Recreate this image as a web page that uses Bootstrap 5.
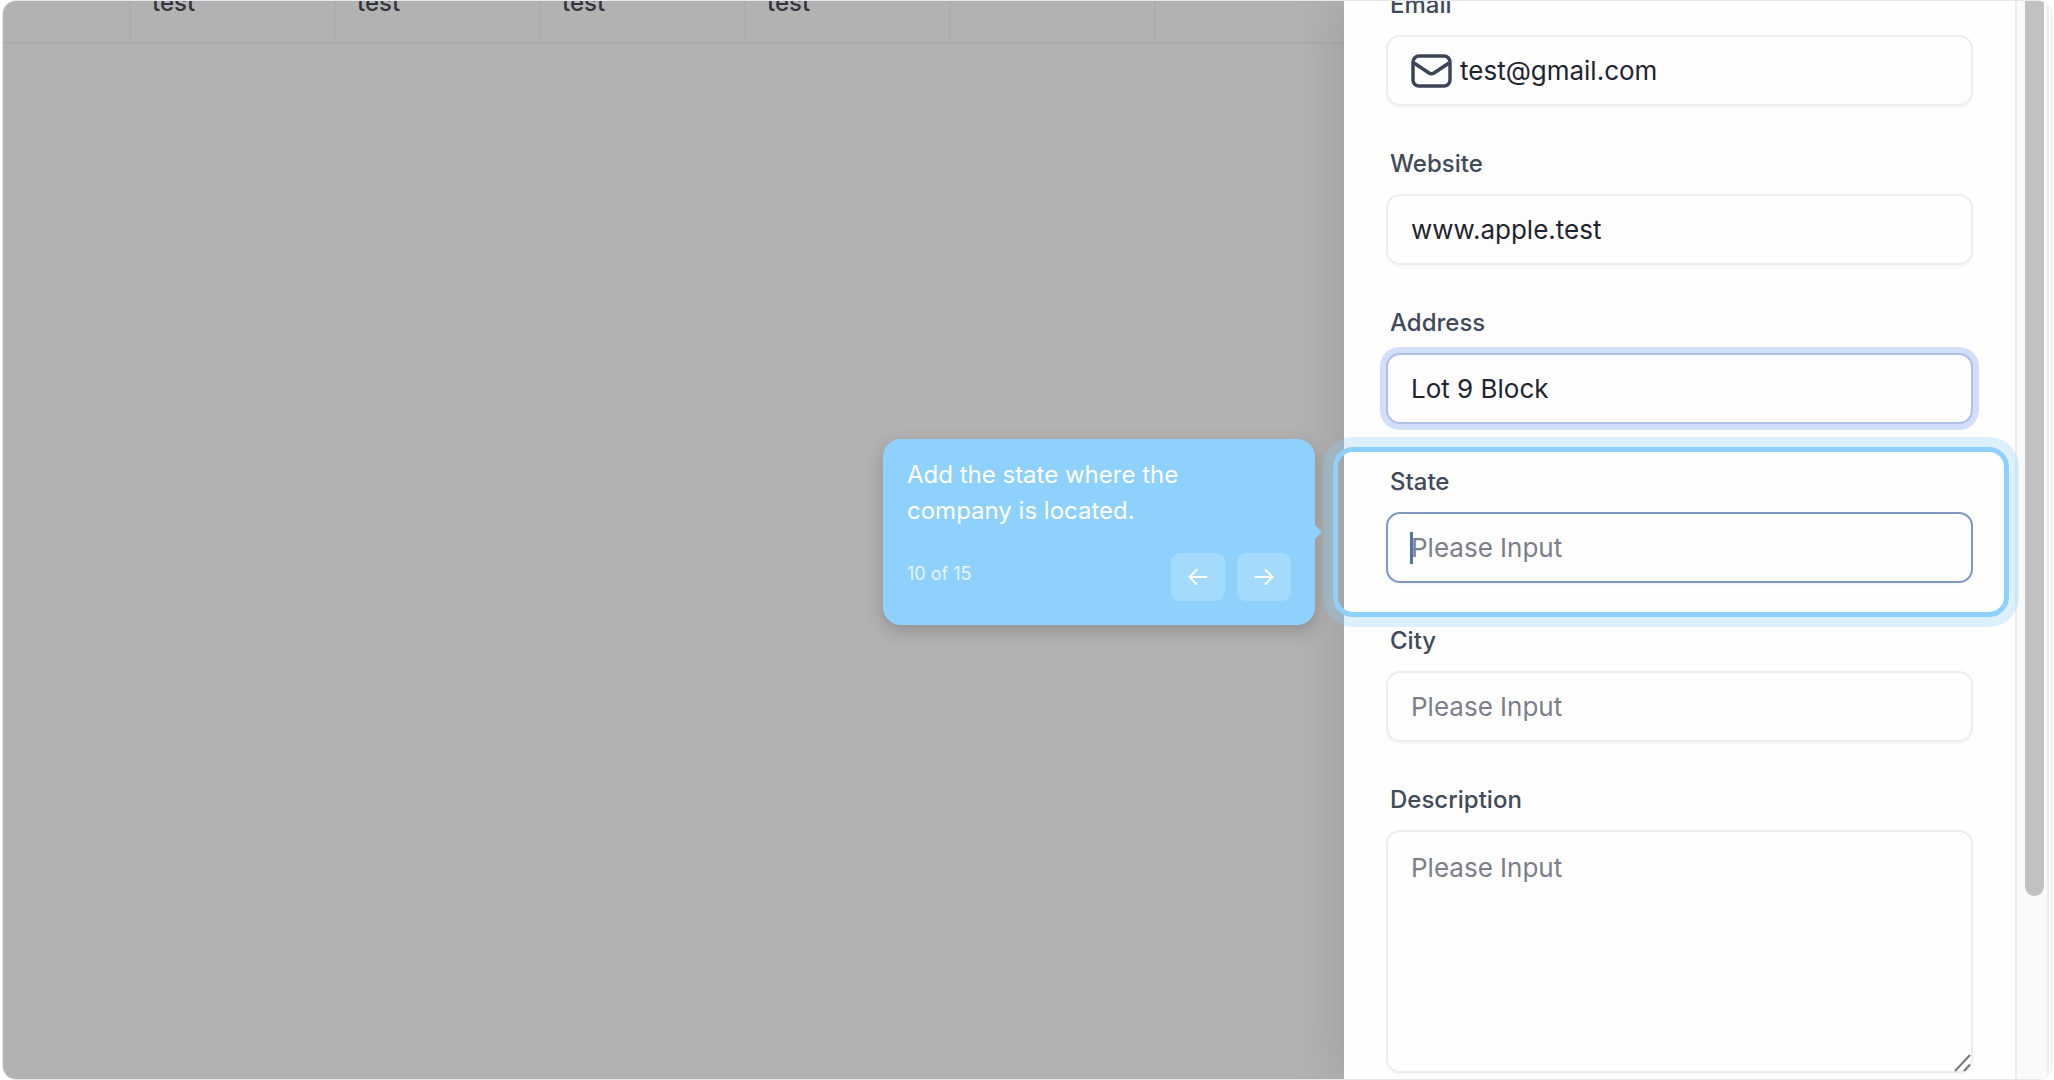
<!DOCTYPE html>
<html lang="en">
<head>
<meta charset="utf-8">
<meta name="viewport" content="width=device-width, initial-scale=1">
<title>Add company</title>
<link rel="stylesheet" href="https://cdn.jsdelivr.net/npm/bootstrap@5.3.0/dist/css/bootstrap.min.css">
<script src="https://cdn.jsdelivr.net/npm/bootstrap@5.3.0/dist/js/bootstrap.bundle.min.js"></script>
<style>
  body { font-family: Inter, "Liberation Sans", sans-serif; font-size: 26px; color: #1f2430; background: #fff; }
  .frame { height: 100vh; margin: 0 2px; border: 1px solid #e5e7eb; border-radius: 14px; overflow: hidden; }
  .backdrop-pane { background: #b2b2b2; overflow: hidden; min-width: 0; }
  .grid-row { height: 73px; margin-top: -30px; border-bottom: 2px solid #acacac; }
  .grid-cell { flex: 0 0 205px; border-left: 2px solid #acacac; padding: 14px 21px; font-size: 24px; line-height: 36px; font-weight: 500; color: #33343c; }
  .grid-cell:first-child { flex-basis: 126px; border-left: 0; }
  .grid-cell:last-child { flex: 1 1 0; }
  .side-panel { flex: 0 0 707px; background: #fefefe; box-shadow: 0 0 50px rgba(0,0,0,.14); position: relative; }
  .panel-form { padding: 0 42px; margin-top: -14px; min-width: 0; }
  .field { position: relative; margin-bottom: 40px; }
  .field-label { display: block; margin: 0 0 12px 4px; font-size: 24px; line-height: 36px; font-weight: 500; color: #414a59; }
  .field-box, .field-box:focus { height: 71px; border: 2px solid #ededee; border-radius: 14px; padding: 0 23px; font-size: 26px; line-height: 36px; color: #1f2430; background: #fefefe; box-shadow: 0 2px 3px rgba(0,0,0,.03); }
  .field-box::placeholder { color: #7b7f89; opacity: 1; }
  .area-box { height: 243px; padding-top: 18px; resize: none; display: block; }
  .ringed { border-color: #b0c0e2; box-shadow: 0 0 0 6px #d1dffb; }
  .active-box { border-color: #7d98c2; }
  .bare-input { border: 0; outline: 0; background: transparent; min-width: 0; padding: 0; color: inherit; }
  .text-caret { position: absolute; left: 24px; bottom: 19px; width: 3px; height: 32px; background: #4b74b3; }
  .grip { position: absolute; right: 1px; bottom: 1px; }
  .tour-ring { position: absolute; inset: -17px -36px -34px -53px; border: 5px solid #8ed1fc; border-radius: 20px; box-shadow: 0 0 0 10px rgba(142,209,252,.3); pointer-events: none; }
  .tour-tip { position: absolute; right: calc(100% + 71px); top: -25px; width: 432px; padding: 18px 24px 24px; background: #8ed1fc; border-radius: 18px; color: #fff; box-shadow: 0 6px 18px rgba(0,0,0,.2); }
  .tour-tip::after { content: ""; position: absolute; left: 100%; top: 86px; border: 7px solid transparent; border-left-color: #8ed1fc; border-right-width: 0; }
  .tour-text { font-size: 24px; line-height: 36px; margin-bottom: 24px; padding-right: 48px; }
  .tour-count { font-size: 18px; line-height: 42px; color: rgba(255,255,255,.8); }
  .tour-btn { width: 54px; height: 48px; padding: 0; border: 0; border-radius: 9px; background: rgba(255,255,255,.2); }
  .scroll-track { flex: 0 0 36px; background: #fafafa; border-left: 2px solid #ececec; padding-left: 8px; }
  .scroll-thumb { width: 19px; height: 83%; background: #c1c1c1; border-radius: 0 0 10px 10px; }
  .scroll-edge { width: 4px; border-left: 2px solid #ededed; }
</style>
</head>
<body>
<div class="frame d-flex">
  <main class="backdrop-pane flex-grow-1">
    <div class="grid-row d-flex">
      <div class="grid-cell"></div>
      <div class="grid-cell">test</div>
      <div class="grid-cell">test</div>
      <div class="grid-cell">test</div>
      <div class="grid-cell">test</div>
      <div class="grid-cell"></div>
      <div class="grid-cell"></div>
    </div>
  </main>
  <aside class="side-panel d-flex">
    <form class="panel-form flex-grow-1">
      <div class="field">
        <label class="field-label" for="email">Email</label>
        <div class="field-box d-flex align-items-center">
          <svg class="flex-shrink-0 me-2" width="41" height="34" viewBox="0 0 41 34" fill="none" stroke="#3b4557" stroke-width="3.500" stroke-linejoin="round"><rect x="2" y="2" width="37" height="30" rx="6"/><path d="M3 9l15 10q2.500 1.500 5 0L38 9"/></svg>
          <input class="bare-input flex-grow-1" id="email" type="email" value="test@gmail.com">
        </div>
      </div>
      <div class="field">
        <label class="field-label" for="website">Website</label>
        <input class="form-control field-box" id="website" type="text" value="www.apple.test">
      </div>
      <div class="field">
        <label class="field-label" for="address">Address</label>
        <input class="form-control field-box ringed" id="address" type="text" value="Lot 9 Block">
      </div>
      <div class="field">
        <label class="field-label" for="state">State</label>
        <input class="form-control field-box active-box" id="state" type="text" placeholder="Please Input">
        <span class="text-caret"></span>
        <div class="tour-ring"></div>
        <div class="tour-tip" role="dialog" aria-label="Tour step">
          <p class="tour-text">Add the state where the company is located.</p>
          <div class="d-flex align-items-start justify-content-between">
            <span class="tour-count">10 of 15</span>
            <div class="d-flex tour-nav">
              <button type="button" class="btn tour-btn me-2 d-flex align-items-center justify-content-center" aria-label="Previous"><svg width="20" height="18" viewBox="0 0 20 18" fill="none" stroke="#fff" stroke-width="2" stroke-linecap="round" stroke-linejoin="round"><path d="M18.500 9H1.500M8.500 2l-7 7 7 7"/></svg></button>
              <button type="button" class="btn tour-btn ms-1 d-flex align-items-center justify-content-center" aria-label="Next"><svg width="20" height="18" viewBox="0 0 20 18" fill="none" stroke="#fff" stroke-width="2" stroke-linecap="round" stroke-linejoin="round"><path d="M1.500 9h17M11.500 2l7 7-7 7"/></svg></button>
            </div>
          </div>
        </div>
      </div>
      <div class="field">
        <label class="field-label" for="city">City</label>
        <input class="form-control field-box" id="city" type="text" placeholder="Please Input">
      </div>
      <div class="field mb-0">
        <label class="field-label" for="description">Description</label>
        <textarea class="form-control field-box area-box" id="description" placeholder="Please Input"></textarea>
        <svg class="grip" width="18" height="18" viewBox="0 0 18 18" stroke="#777" stroke-width="2"><path d="M1 17L16 1M10 17l6-6.500"/></svg>
      </div>
    </form>
    <div class="scroll-track d-flex justify-content-between">
      <div class="scroll-thumb"></div>
      <div class="scroll-edge"></div>
    </div>
  </aside>
</div>
</body>
</html>
